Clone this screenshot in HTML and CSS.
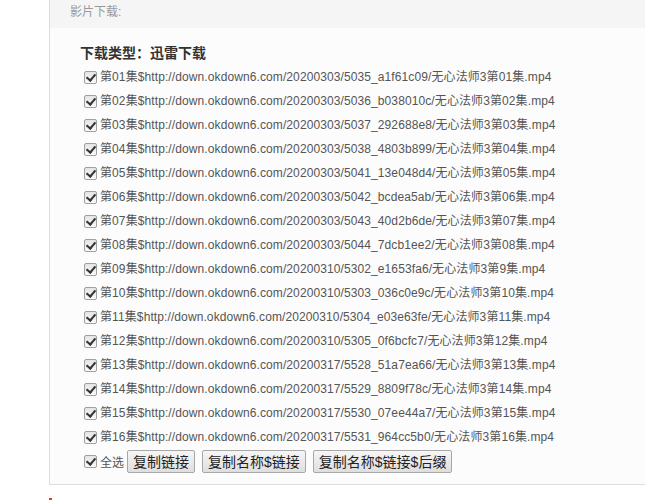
FILE: index.html
```html
<!DOCTYPE html>
<html lang="zh-CN">
<head>
  <meta charset="UTF-8" />
  <meta name="viewport" content="width=device-width, initial-scale=1.0"/>
  <title>影片下载</title>
  <link rel="stylesheet" href="styles.css">
</head>
<body>
  <div class="panel">
    <div class="panel-head">影片下载:</div>

    <div class="panel-body">
      <h3 class="down-type">下载类型：迅雷下载</h3>

      <ul class="down-list">
        <li><label><input type="checkbox" checked> 第01集$http://down.okdown6.com/20200303/5035_a1f61c09/无心法师3第01集.mp4</label></li>
        <li><label><input type="checkbox" checked> 第02集$http://down.okdown6.com/20200303/5036_b038010c/无心法师3第02集.mp4</label></li>
        <li><label><input type="checkbox" checked> 第03集$http://down.okdown6.com/20200303/5037_292688e8/无心法师3第03集.mp4</label></li>
        <li><label><input type="checkbox" checked> 第04集$http://down.okdown6.com/20200303/5038_4803b899/无心法师3第04集.mp4</label></li>
        <li><label><input type="checkbox" checked> 第05集$http://down.okdown6.com/20200303/5041_13e048d4/无心法师3第05集.mp4</label></li>
        <li><label><input type="checkbox" checked> 第06集$http://down.okdown6.com/20200303/5042_bcdea5ab/无心法师3第06集.mp4</label></li>
        <li><label><input type="checkbox" checked> 第07集$http://down.okdown6.com/20200303/5043_40d2b6de/无心法师3第07集.mp4</label></li>
        <li><label><input type="checkbox" checked> 第08集$http://down.okdown6.com/20200303/5044_7dcb1ee2/无心法师3第08集.mp4</label></li>
        <li><label><input type="checkbox" checked> 第09集$http://down.okdown6.com/20200310/5302_e1653fa6/无心法师3第9集.mp4</label></li>
        <li><label><input type="checkbox" checked> 第10集$http://down.okdown6.com/20200310/5303_036c0e9c/无心法师3第10集.mp4</label></li>
        <li><label><input type="checkbox" checked> 第11集$http://down.okdown6.com/20200310/5304_e03e63fe/无心法师3第11集.mp4</label></li>
        <li><label><input type="checkbox" checked> 第12集$http://down.okdown6.com/20200310/5305_0f6bcfc7/无心法师3第12集.mp4</label></li>
        <li><label><input type="checkbox" checked> 第13集$http://down.okdown6.com/20200317/5528_51a7ea66/无心法师3第13集.mp4</label></li>
        <li><label><input type="checkbox" checked> 第14集$http://down.okdown6.com/20200317/5529_8809f78c/无心法师3第14集.mp4</label></li>
        <li><label><input type="checkbox" checked> 第15集$http://down.okdown6.com/20200317/5530_07ee44a7/无心法师3第15集.mp4</label></li>
        <li><label><input type="checkbox" checked> 第16集$http://down.okdown6.com/20200317/5531_964cc5b0/无心法师3第16集.mp4</label></li>
      </ul>

      <div class="down-actions">
        <label><input type="checkbox" checked> 全选</label>
        <button class="copy-btn">复制链接</button>
        <button class="copy-btn">复制名称$链接</button>
        <button class="copy-btn">复制名称$链接$后缀</button>
      </div>
    </div>
  </div>

  <div class="after-mark"></div>
</body>
</html>
```

FILE: styles.css
```css
* {
  box-sizing: border-box;
  margin: 0;
  padding: 0;
}

html, body {
  background: #fff;
  overflow: hidden;
  font-family: "Liberation Sans", "Noto Sans CJK SC", sans-serif;
  font-size: 12px;
  color: #555;
}

.panel {
  margin-left: 49px;
  border-left: 1px solid #ddd;
  border-bottom: 1px solid #ddd;
}

.panel-head {
  height: 28px;
  line-height: 25px;
  padding-left: 20px;
  background: #f5f5f5;
  color: #999;
}

.panel-body {
  background: #fcfcfc;
  padding: 15px 0 11px 30px;
}

.down-type {
  font-size: 14px;
  line-height: 20px;
  font-weight: bold;
  color: #333;
}

.down-list {
  list-style: none;
  margin-top: 2px;
  letter-spacing: 0.1px;
}

.down-list li {
  line-height: 24px;
  height: 24px;
  white-space: nowrap;
}

label {
  display: inline-flex;
  align-items: center;
  gap: 3px;
}

input[type="checkbox"] {
  appearance: none;
  width: 13px;
  height: 13px;
  margin-left: 4px;
  border: 1px solid #a0a0a0;
  border-radius: 2px;
  background: linear-gradient(#e4e4e4, #fafafa);
  position: relative;
}

input[type="checkbox"]:checked::after {
  content: "";
  position: absolute;
  left: 3px;
  top: 0px;
  width: 4px;
  height: 7px;
  border-right: 2px solid #333;
  border-bottom: 2px solid #333;
  transform: rotate(40deg);
}

.down-actions {
  display: flex;
  align-items: center;
  gap: 7px;
  height: 24px;
}

.down-actions label {
  margin-right: -4px;
}

.copy-btn {
  height: 23px;
  padding: 0 5px;
  font-family: inherit;
  font-size: 14px;
  color: #222;
  border: 1px solid #a8a8a8;
  border-radius: 2px;
  background: linear-gradient(#f6f6f6, #dedede);
}

.after-mark {
  width: 3px;
  height: 2px;
  margin: 13px 0 0 49px;
  background: #e33;
}
```
